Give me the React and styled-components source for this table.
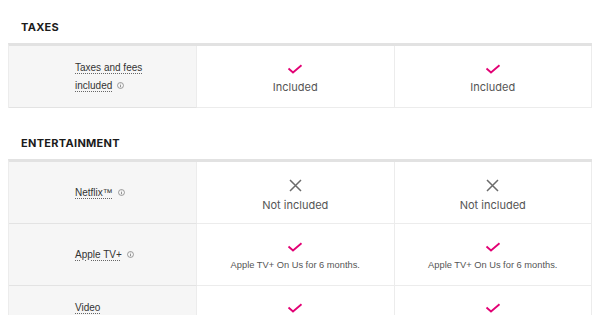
import React from 'react';
import styled, { createGlobalStyle } from 'styled-components';

const sections = [
  {
    title: 'TAXES',
    rows: [
      {
        label: ['Taxes and fees', 'included'],
        info: true,
        values: [
          { ok: true, text: 'Included' },
          { ok: true, text: 'Included' },
        ],
      },
    ],
  },
  {
    title: 'ENTERTAINMENT',
    rows: [
      {
        label: ['Netflix™'],
        info: true,
        values: [
          { ok: false, text: 'Not included' },
          { ok: false, text: 'Not included' },
        ],
      },
      {
        label: ['Apple TV+'],
        info: true,
        values: [
          { ok: true, text: 'Apple TV+ On Us for 6 months.', small: true },
          { ok: true, text: 'Apple TV+ On Us for 6 months.', small: true },
        ],
      },
      {
        label: ['Video'],
        info: false,
        top: true,
        values: [{ ok: true }, { ok: true }],
      },
    ],
  },
];

function Check() {
  return (
    <svg width="16" height="10" viewBox="0 0 16 10" fill="none">
      <path d="M1.5 4.5 L6 8.5 L14.5 1.2" stroke="#e20074" strokeWidth="1.8" />
    </svg>
  );
}

function Cross() {
  return (
    <svg width="13" height="13" viewBox="0 0 13 13" fill="none">
      <path d="M1 1 L12 12 M12 1 L1 12" stroke="#6b6b6b" strokeWidth="1.5" />
    </svg>
  );
}

function Info() {
  return (
    <svg width="7" height="7" viewBox="0 0 8 8" fill="none">
      <circle cx="4" cy="4" r="3.4" stroke="#777" strokeWidth="0.8" />
      <path d="M4 3.5 V6" stroke="#777" strokeWidth="0.9" />
      <circle cx="4" cy="2.3" r="0.5" fill="#777" />
    </svg>
  );
}

export default function App() {
  return (
    <Page>
      <Global />
      {sections.map(section => (
        <Section key={section.title}>
          <Heading>{section.title}</Heading>
          <Table>
            {section.rows.map((row, i) => (
              <React.Fragment key={i}>
                <LabelCell $top={row.top}>
                  <LabelText>
                    {row.label.map((line, j) => (
                      <LabelLine key={j}>
                        <Dotted>{line}</Dotted>
                        {row.info && j === row.label.length - 1 && (
                          <InfoWrap>
                            <Info />
                          </InfoWrap>
                        )}
                      </LabelLine>
                    ))}
                  </LabelText>
                </LabelCell>
                {row.values.map((v, k) => (
                  <ValueCell key={k} $top={row.top}>
                    <IconBox>{v.ok ? <Check /> : <Cross />}</IconBox>
                    {v.text && <ValueText $small={v.small}>{v.text}</ValueText>}
                  </ValueCell>
                ))}
              </React.Fragment>
            ))}
          </Table>
        </Section>
      ))}
    </Page>
  );
}

const Global = createGlobalStyle`
  *, *::before, *::after {
    box-sizing: border-box;
  }
  body {
    margin: 0;
    background: #fff;
    font-family: Inter, "Noto Sans", sans-serif;
    color: #222;
  }
`;

const Page = styled.div`
  padding: 0 8px;
  display: flex;
  flex-direction: column;
  gap: 8px;
`;

const Section = styled.section``;

const Heading = styled.h2`
  margin: 0;
  padding: 20px 13px 9px;
  font-size: 11px;
  line-height: 14px;
  font-weight: 700;
  letter-spacing: 0.3px;
  color: #1b1b1b;
`;

const Table = styled.div`
  display: grid;
  grid-template-columns: 188px 1fr 1fr;
  border-top: 3px solid #e2e2e2;
  border-left: 1px solid #ececec;
`;

const LabelCell = styled.div`
  background: #f6f6f6;
  border-right: 1px solid #ececec;
  border-bottom: 1px solid #e3e3e3;
  min-height: 62px;
  display: flex;
  align-items: ${p => (p.$top ? 'flex-start' : 'center')};
  padding: ${p => (p.$top ? '13px 0 0 66px' : '0 0 0 66px')};
`;

const LabelText = styled.div`
  font-family: "Liberation Sans", Arial, sans-serif;
  font-size: 10px;
  line-height: 18px;
  color: #333;
`;

const LabelLine = styled.div`
  display: flex;
  align-items: center;
`;

const Dotted = styled.span`
  text-decoration: underline dotted #666;
  text-underline-offset: 2px;
`;

const InfoWrap = styled.span`
  display: inline-flex;
  margin-left: 5px;
`;

const ValueCell = styled.div`
  border-right: 1px solid #ececec;
  border-bottom: 1px solid #ececec;
  min-height: 62px;
  display: flex;
  flex-direction: column;
  align-items: center;
  justify-content: ${p => (p.$top ? 'flex-start' : 'center')};
  padding-top: ${p => (p.$top ? '17px' : '6px')};
  gap: 6px;
`;

const IconBox = styled.div`
  display: flex;
`;

const ValueText = styled.div`
  font-family: ${p =>
    p.$small ? '"Liberation Sans", Arial, sans-serif' : 'Inter, "Noto Sans", sans-serif'};
  font-size: ${p => (p.$small ? '9.3px' : '11px')};
  line-height: 15px;
  color: #555;
`;
